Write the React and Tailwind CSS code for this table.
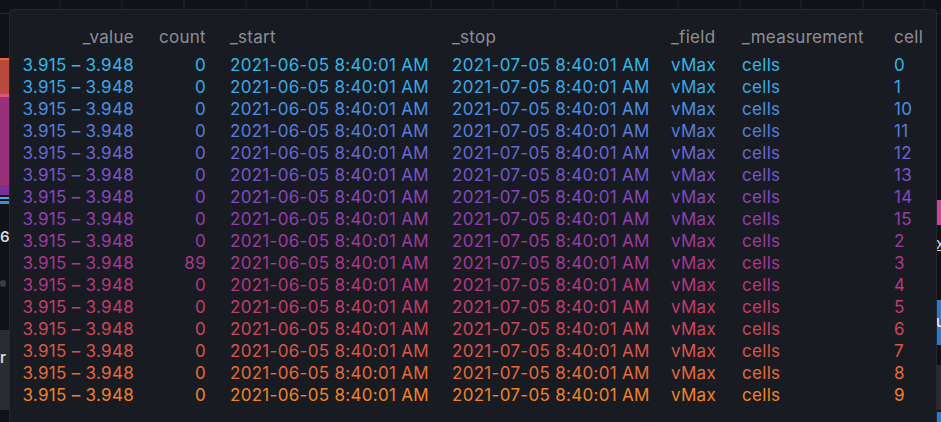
const rows = [
  ['0', '#33b7e9'],
  ['1', '#3ba7e7'],
  ['10', '#4a90e2'],
  ['11', '#5a7cdc'],
  ['12', '#6867d3'],
  ['13', '#7657c9'],
  ['14', '#8449bc'],
  ['15', '#9040ae'],
  ['2', '#9c3ba0'],
  ['3', '#a83890'],
  ['4', '#b4387f'],
  ['5', '#c13d6d'],
  ['6', '#cc475d'],
  ['7', '#d8574b'],
  ['8', '#e56b38'],
  ['9', '#f28327'],
];

const gridX = [60, 122, 184, 246, 307, 370, 431, 493, 555, 617, 678, 740, 801, 863, 924];

const cols = 'grid grid-cols-[124px_72px_222px_219px_71px_152px_1fr] whitespace-nowrap';

const Backdrop = () => (
  <svg className="absolute inset-0" width="941" height="422">
    <rect width="941" height="422" fill="#111217" />
    {gridX.map((x) => (
      <line key={x} x1={x} y1="0" x2={x} y2="13" stroke="#24262c" />
    ))}
    <line x1="0" y1="13.5" x2="941" y2="13.5" stroke="#24262c" />
    <rect x="0" y="58" width="10" height="2" fill="#e8643a" />
    <rect x="0" y="60" width="10" height="34" fill="#b84a3f" />
    <rect x="0" y="94" width="10" height="3" fill="#e2557a" />
    <rect x="0" y="97" width="10" height="88" fill="#98307a" />
    <rect x="0" y="185" width="10" height="10" fill="#7a2f98" />
    <rect x="0" y="197" width="10" height="2" fill="#4aa6e6" />
    <rect x="0" y="201" width="10" height="3" fill="#3f8fd8" />
    <rect x="0" y="280" width="6" height="7" rx="3" fill="#3a3c44" />
    <rect x="0" y="330" width="10" height="80" fill="#2a2c33" />
    <rect x="936" y="200" width="5" height="25" fill="#d23fa6" />
    <rect x="936" y="300" width="5" height="45" fill="#1f7fd6" />
    <rect x="936" y="365" width="5" height="45" fill="#2a2c33" />
    <rect x="936" y="412" width="5" height="10" fill="#1f7fd6" />
  </svg>
);

export default function App() {
  return (
    <div className="relative w-[941px] h-[422px] overflow-hidden bg-[#111217]" style={{ fontFamily: 'Inter, "Noto Sans", sans-serif' }}>
      <Backdrop />
      <span className="absolute left-0 top-[226px] text-[15px] font-semibold leading-[22px] text-[#d8d9da]">6:</span>
      <span className="absolute left-0 top-[347px] text-[15px] font-semibold leading-[22px] text-[#d8d9da]">r</span>
      <span className="absolute left-[936px] top-[233px] text-[15px] leading-[22px] text-[#d8d9da] underline">x</span>
      <span className="absolute left-[936px] top-[311px] text-[15px] leading-[22px] text-white">u</span>
      <div className="absolute left-[9px] top-[9px] w-[928px] h-[430px] rounded-[4px] border border-[#262830] bg-[#181b21] pt-[16px] text-[17px] leading-[22px] tracking-[0.3px]">
        <div className={`${cols} text-[#8e8e97] mb-[6px]`}>
          <div className="text-right">_value</div>
          <div className="text-right">count</div>
          <div className="pl-6">_start</div>
          <div className="pl-6">_stop</div>
          <div className="pl-6">_field</div>
          <div className="pl-6">_measurement</div>
          <div className="pl-6">cell</div>
        </div>
        {rows.map(([cell, color]) => (
          <div key={cell} className={cols} style={{ color }}>
            <div className="text-right">3.915 – 3.948</div>
            <div className="text-right">{cell === '3' ? '89' : '0'}</div>
            <div className="pl-6">2021-06-05 8:40:01 AM</div>
            <div className="pl-6">2021-07-05 8:40:01 AM</div>
            <div className="pl-6">vMax</div>
            <div className="pl-6">cells</div>
            <div className="pl-6">{cell}</div>
          </div>
        ))}
      </div>
    </div>
  );
}
